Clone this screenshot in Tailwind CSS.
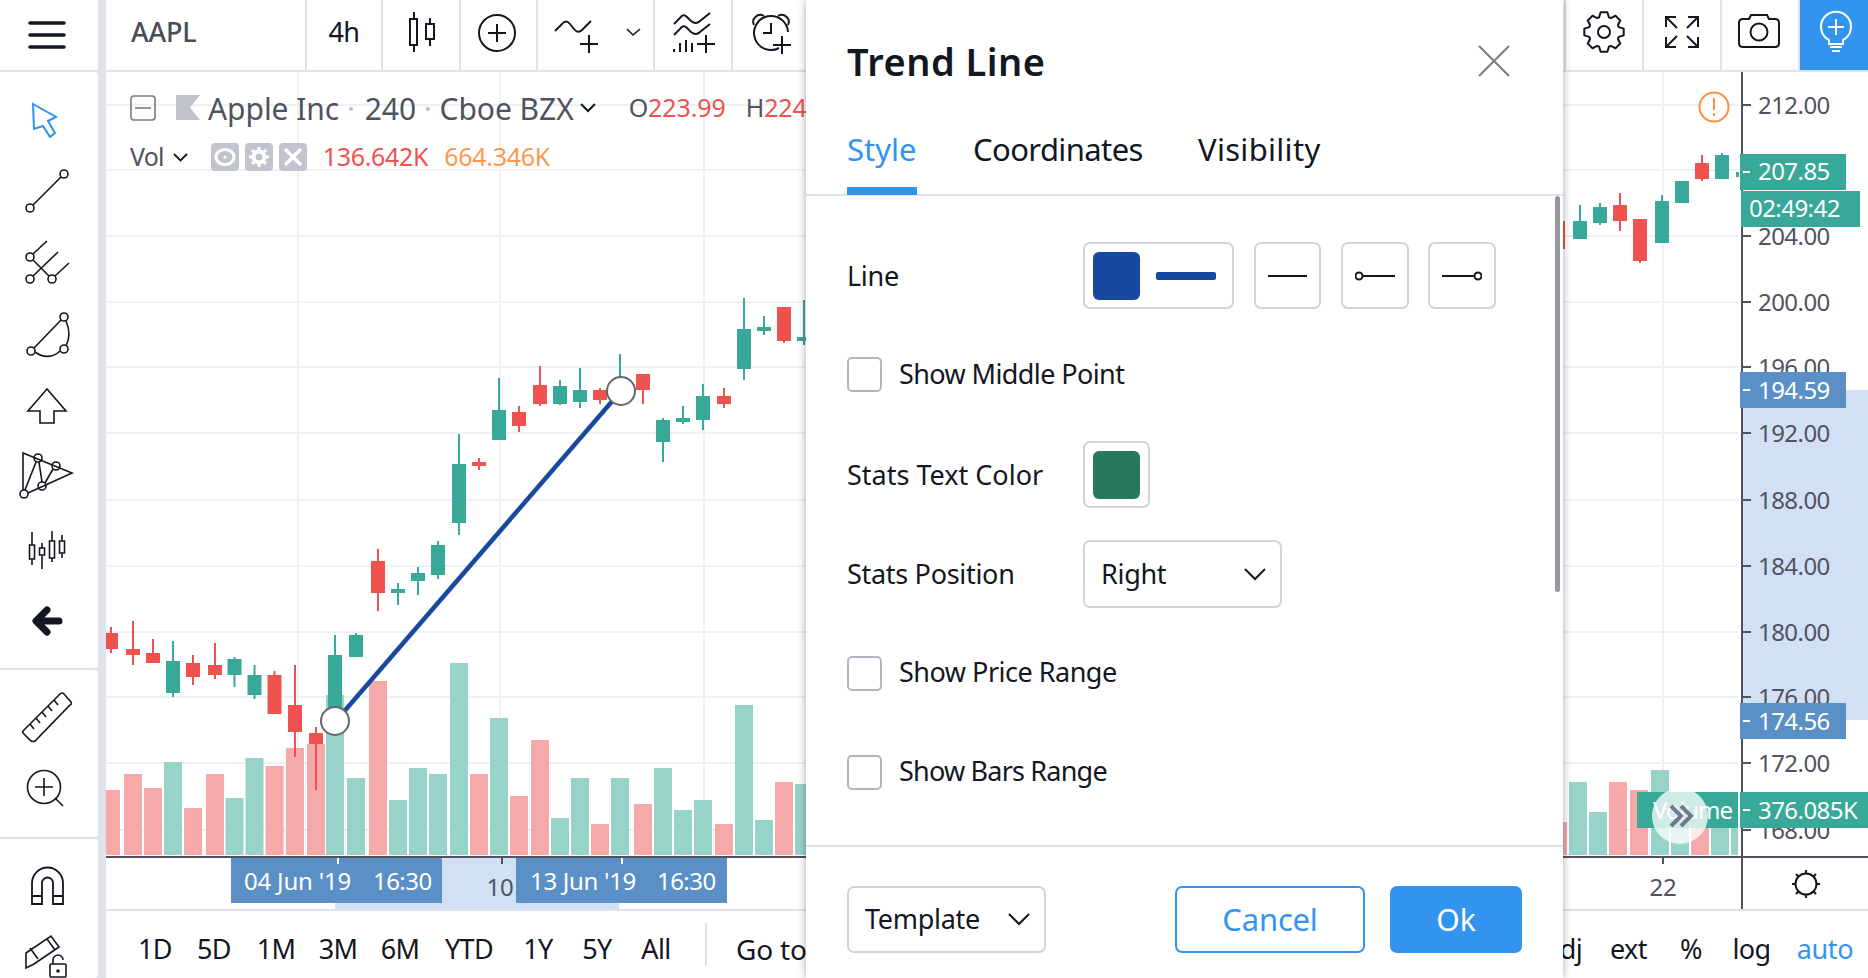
<!DOCTYPE html>
<html lang="en">
  <head>
    <meta charset="UTF-8" />
    <meta name="viewport" content="width=device-width, initial-scale=1.0" />
    <script src="https://cdn.jsdelivr.net/npm/@tailwindcss/browser@4"></script>
    <title>Trend Line</title>
  </head>
  <body class="w-[1868px] h-[978px] relative flex overflow-hidden bg-[#e0e3eb] font-['Noto_Sans',sans-serif] text-[#131722]">
    <!-- left tools -->
    <aside class="w-[98px] h-full flex flex-col gap-[2px] shrink-0">
      <div class="h-[70px] bg-white flex items-center">
        <svg class="w-[60px] h-[60px] ml-[17px]" viewBox="17 2 60 60" fill="none" stroke="#131722" stroke-width="3.5" stroke-linecap="round">
          <path d="M30 20H64M30 32H64M30 44H64" />
        </svg>
      </div>
      <div class="h-[596px] bg-white rounded-r-[3px] pt-[12px] flex flex-col">
        <div class="h-[72px] flex items-center">
          <svg class="w-[60px] h-[60px] ml-[17px]" viewBox="17 90 60 60" fill="none" stroke="#2f94f0" stroke-width="2">
            <path d="M33 104L56 117L48 121L55 133L50 137L43 126L34 129Z" />
          </svg>
        </div>
        <div class="h-[72px] flex items-center">
          <svg class="w-[60px] h-[60px] ml-[17px]" viewBox="17 162 60 60" fill="none" stroke="#131722" stroke-width="1.6">
            <circle cx="30" cy="208" r="4" /><circle cx="64" cy="174" r="4" /><path d="M33 205L61 177" />
          </svg>
        </div>
        <div class="h-[72px] flex items-center">
          <svg class="w-[60px] h-[60px] ml-[17px]" viewBox="17 234 60 60" fill="none" stroke="#131722" stroke-width="1.6">
            <circle cx="30" cy="257" r="4" /><circle cx="30" cy="279" r="4" /><circle cx="52" cy="279" r="4" />
            <path d="M33 254L47 241M33 276L58 252M55 276L69 263M33 260L49 276" />
          </svg>
        </div>
        <div class="h-[72px] flex items-center">
          <svg class="w-[60px] h-[60px] ml-[17px]" viewBox="17 306 60 60" fill="none" stroke="#131722" stroke-width="1.6">
            <circle cx="31" cy="351" r="4" /><circle cx="64" cy="317" r="4" /><circle cx="64" cy="349" r="4" />
            <path d="M34 348L61 320M66 321C70 330 70 338 66 346M35 352C43 358 53 358 60 351" />
          </svg>
        </div>
        <div class="h-[72px] flex items-center">
          <svg class="w-[60px] h-[60px] ml-[17px]" viewBox="17 378 60 60" fill="none" stroke="#131722" stroke-width="1.6">
            <path d="M47 389L28 411H40V423H54V411H66Z" />
          </svg>
        </div>
        <div class="h-[72px] flex items-center">
          <svg class="w-[60px] h-[60px] ml-[17px]" viewBox="17 450 60 60" fill="none" stroke="#131722" stroke-width="1.6">
            <circle cx="24" cy="494" r="4" /><circle cx="38" cy="458" r="4" /><circle cx="56" cy="466" r="4" /><circle cx="42" cy="486" r="4" />
            <path d="M23 490V453L72 473L28 493M25 490L36 462M39 462L42 482M45 483L53 469" />
          </svg>
        </div>
        <div class="h-[72px] flex items-center">
          <svg class="w-[60px] h-[60px] ml-[17px]" viewBox="17 522 60 60" fill="none" stroke="#131722" stroke-width="1.6">
            <path d="M32 532V565M42 543V569M52 531V562M62 535V558" />
            <path d="M29.500 545h5v14h-5zM39.500 548h5v7h-5zM49.500 541h5v17h-5zM59.500 541h5v12h-5z" fill="#fff" />
          </svg>
        </div>
        <div class="h-[72px] flex items-center">
          <svg class="w-[60px] h-[60px] ml-[17px]" viewBox="17 594 60 60" fill="none" stroke="#131722" stroke-width="7" stroke-linecap="round" stroke-linejoin="round">
            <path d="M59 621H37M47 610L36 621L47 632" />
          </svg>
        </div>
      </div>
      <div class="h-[167px] bg-white rounded-r-[3px] pt-[12px] flex flex-col">
        <div class="h-[70px] flex items-center">
          <svg class="w-[60px] h-[60px] ml-[17px]" viewBox="17 687 60 60" fill="none" stroke="#131722" stroke-width="1.6">
            <path d="M23 731L60 694Q62 692 64 694L71 702Q72 704 70 705L35 741Q33 742 31 741L24 734Q22 732 23 731Z" />
            <path d="M30 724L34 729M36 718L40 723M42 712L46 717M48 706L52 711M54 700L58 705" />
          </svg>
        </div>
        <div class="h-[70px] flex items-center">
          <svg class="w-[60px] h-[60px] ml-[17px]" viewBox="17 757 60 60" fill="none" stroke="#131722" stroke-width="1.6">
            <circle cx="44" cy="787" r="16.500" /><path d="M55 798L63 806M44 778V796M35 787H53" />
          </svg>
        </div>
      </div>
      <div class="flex-1 bg-white rounded-r-[3px] pt-[12px] flex flex-col">
        <div class="h-[70px] flex items-center">
          <svg class="w-[60px] h-[60px] ml-[17px]" viewBox="17 856 60 60" fill="none" stroke="#131722" stroke-width="1.8">
            <path d="M32 904V883A15.500 15.500 0 0 1 63 883V904H53V883A5.500 5.500 0 0 0 42 883V904ZM32 896H42M53 896H63" />
          </svg>
        </div>
        <div class="h-[57px] flex items-start">
          <svg class="w-[60px] h-[57px] ml-[17px]" viewBox="17 921 60 57" fill="none" stroke="#131722" stroke-width="1.6">
            <path d="M26 953L51 936L59 947L34 964L26 968ZM30 948L38 959M47 939L55 950" />
            <rect x="50" y="964" width="16" height="13" rx="1" /><path d="M53 964V960A5 5 0 0 1 63 960" /><circle cx="58" cy="971" r="1" fill="#131722" />
          </svg>
        </div>
      </div>
    </aside>

    <main class="w-[1762px] h-full ml-[8px] flex flex-col gap-[2px]">
      <!-- top toolbar -->
      <header class="h-[70px] flex gap-[2px] shrink-0">
        <div class="w-[199px] bg-white flex items-center pl-[25px] pb-[6px] text-[27px] font-medium text-[#4a4d58] tracking-[-0.2px]">AAPL</div>
        <div class="w-[74px] bg-white flex items-center justify-center pb-[6px] text-[27px] tracking-[-0.5px]">4h</div>
        <div class="w-[76px] bg-white">
          <svg class="w-[76px] h-[70px]" viewBox="383 0 76 70" fill="none" stroke="#131722" stroke-width="2">
            <path d="M414 12V19M414 45V52M430 18V24M430 39V46" /><rect x="410" y="19" width="7" height="26" /><rect x="426" y="24" width="8" height="15" />
          </svg>
        </div>
        <div class="w-[75px] bg-white">
          <svg class="w-[75px] h-[70px]" viewBox="461 0 75 70" fill="none" stroke="#131722" stroke-width="2">
            <circle cx="497" cy="33" r="18" /><path d="M497 24V42M488 33H506" />
          </svg>
        </div>
        <div class="w-[115px] bg-white">
          <svg class="w-[115px] h-[70px]" viewBox="538 0 115 70" fill="none" stroke="#131722" stroke-width="2">
            <path d="M555 31L562 24Q566 19 570 24L574 29Q578 34 582 30L591 21" /><path d="M589 35V53M580 44H598" /><path d="M627 29L633 35L640 29" stroke-width="1.6" />
          </svg>
        </div>
        <div class="w-[76px] bg-white">
          <svg class="w-[76px] h-[70px]" viewBox="655 0 76 70" fill="none" stroke="#131722" stroke-width="2">
            <path d="M674 24L680 18Q683 13 687 17L691 21Q696 25 700 21L710 13M674 35L680 29Q683 24 687 28L691 32Q696 36 700 32L710 24" />
            <path d="M674 49V52M680 43V52M686 40V52M692 43V52" /><path d="M706 35V53M697 44H715" />
          </svg>
        </div>
        <div class="flex-1 bg-white relative">
          <svg class="absolute left-0 top-0 w-[76px] h-[70px]" viewBox="733 0 76 70" fill="none" stroke="#131722" stroke-width="2">
            <path d="M779 48A17 17 0 1 1 788 32M771 23V33H763" /><path d="M754 25A7 7 0 0 1 764 16M778 16A7 7 0 0 1 788 25" /><path d="M782 36V54M773 45H791" />
          </svg>
        </div>
        <div class="w-[76px] bg-white">
          <svg class="w-[76px] h-[70px]" viewBox="1566 0 76 70" fill="none" stroke="#131722" stroke-width="2" id="gearIcon"></svg>
        </div>
        <div class="w-[76px] bg-white">
          <svg class="w-[76px] h-[70px]" viewBox="1644 0 76 70" fill="none" stroke="#131722" stroke-width="2">
            <path d="M1666 27V17H1676M1666 17L1677 28M1698 27V17H1688M1698 17L1687 28M1666 37V47H1676M1666 47L1677 36M1698 37V47H1688M1698 47L1687 36" />
          </svg>
        </div>
        <div class="w-[76px] bg-white">
          <svg class="w-[76px] h-[70px]" viewBox="1722 0 76 70" fill="none" stroke="#131722" stroke-width="2">
            <path d="M1743 19H1749L1751 15H1767L1769 19H1775Q1779 19 1779 23V43Q1779 47 1775 47H1743Q1739 47 1739 43V23Q1739 19 1743 19Z" /><circle cx="1759" cy="32" r="8.500" />
          </svg>
        </div>
        <div class="w-[68px] bg-[#3394f0]">
          <svg class="w-[68px] h-[70px]" viewBox="1800 0 68 70" fill="none" stroke="#fff" stroke-width="2">
            <path d="M1829 40A15 15 0 1 1 1843 40V44H1829ZM1836 19V35M1828 27H1844M1830 47H1842M1832 51H1840" />
          </svg>
        </div>
      </header>

      <!-- chart pane -->
      <section class="h-[837px] relative bg-white shrink-0">
        <svg id="chart" class="w-[1762px] h-[837px] block" viewBox="106 72 1762 837"></svg>
        <div class="absolute left-[24px] top-[16px] flex items-center h-[40px] text-[#50535e]">
          <svg class="w-[26px] h-[26px]" viewBox="0 0 26 26" fill="none" stroke="#787b86" stroke-width="1.6"><rect x="1" y="1" width="24" height="24" rx="3" /><path d="M5 13H21" /></svg>
          <svg class="w-[24px] h-[26px] ml-[20px]" viewBox="0 0 24 26" fill="#c1c4cd"><path d="M0 0H24L14 12.500L24 25H0Z" /></svg>
          <span class="ml-[8px] text-[30px] tracking-[-0.05px] whitespace-nowrap">Apple Inc <span class="text-[#c1c4cd] mr-[2px]">·</span> 240 <span class="text-[#c1c4cd]">·</span> Cboe BZX</span>
          <svg class="w-[16px] h-[10px] ml-[6px]" viewBox="0 0 16 10" fill="none" stroke="#131722" stroke-width="2"><path d="M1 1L8 8L15 1" /></svg>
          <span class="ml-[33px] text-[25px] tracking-[-0.1px]">O<span class="text-[#ef5350]">223.99</span></span>
          <span class="ml-[20px] text-[25px] tracking-[-0.1px]">H<span class="text-[#ef5350]">224.90</span></span>
        </div>
        <div class="absolute left-[24px] top-[70px] flex items-center h-[30px] text-[#50535e]">
          <span class="text-[25px] tracking-[-0.8px]">Vol</span>
          <svg class="w-[15px] h-[9px] ml-[9px]" viewBox="0 0 15 9" fill="none" stroke="#131722" stroke-width="1.8"><path d="M1 1L7.500 7.500L14 1" /></svg>
          <div class="ml-[23px] flex gap-[6px]">
            <div class="w-[28px] h-[28px] rounded-[4px] bg-[#c1c4cd] flex items-center justify-center">
              <svg class="w-[22px] h-[22px]" viewBox="0 0 22 22" fill="none" stroke="#fff" stroke-width="3"><ellipse cx="11" cy="11" rx="9" ry="7.500" /><circle cx="11" cy="11" r="1.500" fill="#fff" stroke="none" /></svg>
            </div>
            <div class="w-[28px] h-[28px] rounded-[4px] bg-[#c1c4cd] flex items-center justify-center">
              <svg class="w-[22px] h-[22px]" viewBox="0 0 22 22" fill="none" stroke="#fff" stroke-width="4"><circle cx="11" cy="11" r="5.500" /><path d="M11 1V4M11 18V21M1 11H4M18 11H21M4 4L6 6M16 16L18 18M18 4L16 6M6 16L4 18" stroke-width="3" /></svg>
            </div>
            <div class="w-[28px] h-[28px] rounded-[4px] bg-[#c1c4cd] flex items-center justify-center">
              <svg class="w-[20px] h-[20px]" viewBox="0 0 20 20" fill="none" stroke="#fff" stroke-width="3.500"><path d="M2 2L18 18M18 2L2 18" /></svg>
            </div>
          </div>
          <span class="ml-[16px] text-[25px] tracking-[-0.3px] text-[#ef5350]">136.642K</span>
          <span class="ml-[16px] text-[25px] tracking-[-0.3px] text-[#ff9850]">664.346K</span>
        </div>
      </section>

      <!-- bottom toolbar -->
      <footer class="flex-1 bg-white flex items-center pl-[20px] pt-[9px] text-[27px] tracking-[-0.6px] whitespace-nowrap">
        <div class="w-[58px] text-center">1D</div>
        <div class="w-[60px] text-center">5D</div>
        <div class="w-[64px] text-center">1M</div>
        <div class="w-[60px] text-center">3M</div>
        <div class="w-[64px] text-center">6M</div>
        <div class="w-[74px] text-center">YTD</div>
        <div class="w-[64px] text-center">1Y</div>
        <div class="w-[54px] text-center">5Y</div>
        <div class="w-[64px] text-center">All</div>
        <div class="w-[2px] h-[43px] -mt-[9px] ml-[17px] bg-[#e0e3eb]"></div>
        <div class="ml-[29px] text-[28px] tracking-[-0.2px] -mt-[1px]">Go to...</div>
        <div class="ml-auto flex">
          <div class="pr-[11px]">adj</div>
          <div class="w-[74px] text-center pr-[3px]">ext</div>
          <div class="w-[50px] text-center pr-[2px]">%</div>
          <div class="w-[72px] text-center pr-[3px]">log</div>
          <div class="w-[72px] text-center tracking-[-0.3px] text-[#3394f0]">auto</div>
          <div class="w-[7px]"></div>
        </div>
      </footer>
    </main>

    <!-- Trend Line dialog -->
    <div class="absolute left-[806px] top-0 w-[757px] h-[978px] bg-white shadow-[0_0_8px_rgba(0,0,0,0.35)] flex flex-col">
      <div class="h-[122px] flex items-center justify-between pl-[41px] pr-[53px] shrink-0">
        <div class="text-[38px] font-semibold tracking-[0.5px]">Trend Line</div>
        <svg class="w-[32px] h-[32px]" viewBox="0 0 32 32" fill="none" stroke="#787b86" stroke-width="2"><path d="M1 1L31 31M31 1L1 31" /></svg>
      </div>
      <div class="h-[74px] shrink-0 border-b-2 border-[#e0e3eb] flex gap-[56px] pl-[41px] text-[31px] whitespace-nowrap">
        <div class="relative w-[70px] h-[72px] pt-[4px] text-[#3394f0] after:absolute after:left-0 after:-bottom-[1px] after:w-[70px] after:h-[8px] after:bg-[#3394f0]">Style</div>
        <div class="w-[169px] pt-[4px] tracking-[-0.6px]">Coordinates</div>
        <div class="w-[123px] pt-[4px] tracking-[0.3px]">Visibility</div>
      </div>
      <div class="relative h-[649px] pl-[41px] shrink-0 text-[27px] tracking-[-0.3px] whitespace-nowrap">
        <div class="absolute right-[3px] top-0 w-[5px] h-[396px] rounded-full bg-[#9598a1]"></div>
        <div class="mt-[46px] h-[67px] flex items-center">
          <div class="w-[236px] pt-[1px]">Line</div>
          <div class="w-[151px] h-[67px] rounded-[7px] border-2 border-[#d1d4dc] flex items-center pl-[8px]">
            <div class="w-[47px] h-[48px] rounded-[6px] bg-[#1848a0]"></div>
            <div class="w-[60px] h-[8px] ml-[16px] rounded-[2px] bg-[#1848a0]"></div>
          </div>
          <div class="w-[67px] h-[67px] ml-[20px] rounded-[7px] border-2 border-[#d1d4dc] flex items-center justify-center">
            <div class="w-[39px] h-[2px] bg-[#131722]"></div>
          </div>
          <div class="w-[68px] h-[67px] ml-[20px] rounded-[7px] border-2 border-[#d1d4dc] flex items-center justify-center">
            <svg class="w-[40px] h-[10px]" viewBox="0 0 40 10" fill="none" stroke="#131722" stroke-width="2"><circle cx="4" cy="5" r="3.500" /><path d="M8 5H40" /></svg>
          </div>
          <div class="w-[68px] h-[67px] ml-[19px] rounded-[7px] border-2 border-[#d1d4dc] flex items-center justify-center">
            <svg class="w-[40px] h-[10px]" viewBox="0 0 40 10" fill="none" stroke="#131722" stroke-width="2"><circle cx="36" cy="5" r="3.500" /><path d="M0 5H32" /></svg>
          </div>
        </div>
        <div class="mt-[48px] h-[35px] flex items-center">
          <div class="w-[35px] h-[35px] rounded-[5px] border-2 border-[#b2b5be]"></div>
          <div class="ml-[17px] tracking-[-0.6px]">Show Middle Point</div>
        </div>
        <div class="mt-[49px] h-[67px] flex items-center">
          <div class="w-[236px] pt-[1px] tracking-[0px]">Stats Text Color</div>
          <div class="w-[67px] h-[67px] rounded-[7px] border-2 border-[#d1d4dc] flex items-center justify-center">
            <div class="w-[47px] h-[48px] rounded-[6px] bg-[#26795f]"></div>
          </div>
        </div>
        <div class="mt-[32px] h-[68px] flex items-center">
          <div class="w-[236px]">Stats Position</div>
          <div class="w-[199px] h-[68px] rounded-[7px] border-2 border-[#d1d4dc] flex items-center justify-between pl-[16px] pr-[14px]">
            <span>Right</span>
            <svg class="w-[22px] h-[13px]" viewBox="0 0 22 13" fill="none" stroke="#131722" stroke-width="2"><path d="M1 1L11 11L21 1" /></svg>
          </div>
        </div>
        <div class="mt-[47px] h-[36px] flex items-center">
          <div class="w-[35px] h-[35px] rounded-[5px] border-2 border-[#b2b5be]"></div>
          <div class="ml-[17px] pb-[1px] tracking-[-0.5px]">Show Price Range</div>
        </div>
        <div class="mt-[64px] h-[35px] flex items-center">
          <div class="w-[35px] h-[35px] rounded-[5px] border-2 border-[#b2b5be]"></div>
          <div class="ml-[17px] pb-[2px] tracking-[-0.8px]">Show Bars Range</div>
        </div>
      </div>
      <div class="flex-1 border-t-2 border-[#e0e3eb] pt-[39px] pl-[41px] pr-[41px] flex items-start whitespace-nowrap">
        <div class="w-[199px] h-[67px] rounded-[7px] border-2 border-[#d1d4dc] flex items-center justify-between pl-[16px] pr-[14px] text-[27px] tracking-[-0.3px]">
          <span>Template</span>
          <svg class="w-[22px] h-[13px]" viewBox="0 0 22 13" fill="none" stroke="#131722" stroke-width="2"><path d="M1 1L11 11L21 1" /></svg>
        </div>
        <div class="ml-auto w-[190px] h-[67px] rounded-[7px] border-2 border-[#3394f0] text-[#3394f0] text-[31px] flex items-center justify-center tracking-[-0.2px]">Cancel</div>
        <div class="ml-[25px] w-[132px] h-[67px] rounded-[7px] bg-[#3394f0] text-white text-[30px] flex items-center justify-center">Ok</div>
      </div>
    </div>

    <script>
      const RED = "#ef5350";
      const GREEN = "#38a899";
      const RED_VOL = "#f5a9a8";
      const GREEN_VOL = "#97d3c9";
      const TAG_BLUE = "#5b90c6";
      const AXIS = "#50535e";

      // x, high, open, close, low, up
      const candles = [
        [111, 627, 633, 649, 653, 0], [133, 621, 649, 655, 665, 0], [153, 639, 653, 663, 663, 0],
        [173, 641, 661, 693, 697, 1], [193, 655, 663, 677, 685, 0], [215, 643, 665, 675, 679, 0],
        [234.5, 657, 659, 675, 687, 1], [254.5, 665, 675, 695, 699, 1], [274.5, 671, 675, 714, 714, 0],
        [295, 665, 705, 732, 757, 0], [316, 727, 733, 744, 790, 0], [335, 635, 655, 707, 707, 1],
        [356, 633, 635, 657, 657, 1], [378, 549, 561, 593, 611, 0], [398, 583, 589, 593, 605, 1],
        [418, 567, 573, 581, 595, 1], [438, 541, 545, 575, 579, 1], [459, 434, 464, 523, 535, 1],
        [479, 458, 462, 466, 470, 0], [499, 378, 410, 440, 440, 1], [519, 406, 412, 426, 432, 0],
        [540, 366, 385, 404, 406, 0], [560, 380, 386, 404, 405, 1], [580, 368, 390, 402, 408, 1],
        [600, 388, 390, 400, 404, 0], [620, 354, 380, 400, 400, 1], [643, 374, 374, 390, 404, 0],
        [663, 418, 420, 442, 462, 1], [683, 406, 418, 422, 424, 1], [703, 384, 396, 420, 430, 1],
        [724, 388, 396, 404, 408, 0], [744, 298, 329, 369, 380, 1], [764, 316, 327, 331, 335, 1],
        [784, 307, 307, 341, 343, 0], [804, 300, 337, 341, 345, 1],
        [1558, 221, 221, 249, 249, 0], [1580, 205, 221, 239, 239, 1], [1600, 203, 207, 223, 225, 1],
        [1620, 193, 205, 221, 231, 0], [1640, 219, 219, 261, 263, 0], [1662, 195, 201, 243, 243, 1],
        [1682, 181, 181, 203, 203, 1], [1702, 155, 163, 179, 181, 0], [1722, 153, 155, 179, 179, 1],
      ];

      // x, top, up
      const volumes = [
        [111, 790, 0], [133, 774, 0], [153, 788, 0], [173, 762, 1], [193, 808, 0], [215, 774, 0], [234.5, 798, 1],
        [254.5, 758, 1], [274.5, 766, 0], [295, 748, 0], [316, 744, 0], [335, 695, 1], [356, 778, 1], [378, 681, 0],
        [398, 800, 1], [418, 768, 1], [438, 774, 1], [459, 663, 1], [479, 774, 0], [499, 718, 1], [519, 796, 0],
        [540, 740, 0], [560, 818, 1], [580, 778, 1], [600, 824, 0], [620, 778, 1], [643, 804, 0], [663, 768, 1],
        [683, 810, 1], [703, 800, 1], [724, 824, 0], [744, 705, 1], [764, 820, 1], [784, 782, 0], [804, 784, 1],
        [1558, 822, 0], [1578, 782, 1], [1598, 812, 1], [1618, 782, 0], [1639, 790, 0], [1660, 770, 1],
        [1680, 800, 1], [1700, 800, 0], [1720, 800, 1],
      ];

      const prices = [
        ["212.00", 105], ["204.00", 236], ["200.00", 302], ["196.00", 367], ["192.00", 433], ["188.00", 500],
        ["184.00", 566], ["180.00", 632], ["176.00", 697], ["172.00", 763], ["168.00", 830],
      ];
      const gridY = [105, 170, 236, 302, 367, 433, 500, 566, 632, 697, 763, 830];
      const gridX = [298, 500, 704, 908, 1663];

      function rect(x, y, w, h, fill, extra = "") {
        return `<rect x="${x}" y="${y}" width="${w}" height="${h}" fill="${fill}" ${extra}/>`;
      }

      function label(x, y, text, fill, size = 24, anchor = "start", spacing = -0.55) {
        return `<text x="${x}" y="${y - 1}" fill="${fill}" font-size="${size}" text-anchor="${anchor}" letter-spacing="${spacing}" dominant-baseline="central">${text}</text>`;
      }

      function drawChart() {
        let out = "";
        gridY.forEach((y) => (out += rect(106, y - 1, 1632, 2, "#edf2f7")));
        gridX.forEach((x) => (out += rect(x - 1, 72, 2, 784, "#edf2f7")));

        // highlighted ranges, then the axes
        out += rect(1742, 390, 126, 330, "#d1e0f5");
        out += rect(442, 858, 74, 51, "#d1e0f5") + rect(335, 903, 284, 6, "#d1e0f5");

        volumes.forEach(([x, top, up]) => {
          out += rect(x - 9, top, 18, 855 - top, up ? GREEN_VOL : RED_VOL);
        });
        out += rect(1731, 800, 7, 55, GREEN_VOL);

        candles.forEach(([x, high, open, close, low, up]) => {
          const color = up ? GREEN : RED;
          out += rect(x - 1, high, 2, low - high, color);
          out += rect(x - 7, open, 14, close - open, color);
        });
        out += rect(1736, 172, 3, 5, GREEN);

        // trend line and its anchors
        out += `<line x1="335" y1="722" x2="621" y2="391" stroke="#1848a0" stroke-width="4.5"/>`;
        out += `<circle cx="335" cy="721" r="14" fill="#fff" stroke="#666" stroke-width="2"/>`;
        out += `<circle cx="621" cy="391" r="14" fill="#fff" stroke="#666" stroke-width="2"/>`;

        out += rect(106, 856, 1762, 2, AXIS) + rect(1741, 72, 2, 837, AXIS);

        prices.forEach(([text, y]) => {
          out += rect(1743, y - 1, 8, 2, AXIS);
          out += label(1758, y, text, AXIS);
        });

        // price tags
        const tag = (y, w, text, fill, tickColor = "#fff", dy = 18) =>
          rect(1740, y, w, 36, fill) + rect(1743, y + 17, 7, 2, tickColor) + label(1758, y + dy, text, "#fff");
        out += tag(154, 106, "207.85", GREEN, "#fff", 17);
        out += rect(1741, 191, 119, 36, GREEN) + label(1749, 208, "02:49:42", "#fff");
        out += tag(372, 106, "194.59", TAG_BLUE);
        out += tag(703, 106, "174.56", TAG_BLUE);
        out += rect(1637, 792, 101, 36, GREEN) + label(1653, 810, "Volume", "#fff", 24, "start", -1.1);
        out += tag(792, 128, "376.085K", GREEN);

        // scroll to latest bar
        out += `<circle cx="1680" cy="816" r="28" fill="#fff" fill-opacity="0.76"/>`;
        out += `<path d="M1671 806L1681 816L1671 826M1681 806L1691 816L1681 826" fill="none" stroke="#6f7a88" stroke-width="4"/>`;

        // alert badge
        out += `<circle cx="1714" cy="107" r="14.500" fill="#fff" stroke="#ff9040" stroke-width="2"/>`;
        out += `<path d="M1714 98V110M1714 113V116" stroke="#ff9040" stroke-width="2"/>`;

        // time axis
        out += rect(501, 858, 2, 6, AXIS) + rect(1662, 858, 2, 6, AXIS);
        out += label(500, 887, "10", AXIS, 24, "middle", -0.3);
        out += label(1663, 887, "22", AXIS, 24, "middle", -0.3);
        out += rect(231, 858, 211, 45, TAG_BLUE) + rect(516, 858, 211, 45, TAG_BLUE);
        out += rect(337, 858, 2, 6, "#fff") + rect(621, 858, 2, 6, "#fff");
        out += label(244, 881, "04 Jun '19", "#fff", 24, "start", -0.2) + label(373, 881, "16:30", "#fff");
        out += label(530, 881, "13 Jun '19", "#fff", 24, "start", -0.3) + label(657, 881, "16:30", "#fff");

        // sun toggle
        out += `<g fill="none" stroke="#131722" stroke-width="2"><circle cx="1806" cy="884" r="10.500"/><path d="M1806 870V874M1806 894V898M1792 884H1796M1816 884H1820M1796 874L1799 877M1816 894L1813 891M1816 874L1813 877M1796 894L1799 891"/></g>`;

        document.getElementById("chart").innerHTML = out;
      }

      function drawGear() {
        const cx = 1604, cy = 32;
        let d = "";
        for (let i = 0; i < 8; i++) {
          const a = (i * Math.PI) / 4 - Math.PI / 2;
          const pts = [[-0.32, 15.5], [-0.17, 20], [0.17, 20], [0.32, 15.5]];
          pts.forEach(([da, r]) => {
            const px = cx + r * Math.cos(a + da);
            const py = cy + r * Math.sin(a + da);
            d += (d ? "L" : "M") + px.toFixed(1) + " " + py.toFixed(1);
          });
        }
        document.getElementById("gearIcon").innerHTML =
          `<path d="${d}Z" stroke-linejoin="round"/><circle cx="${cx}" cy="${cy}" r="6"/>`;
      }

      drawChart();
      drawGear();
    </script>
  </body>
</html>
